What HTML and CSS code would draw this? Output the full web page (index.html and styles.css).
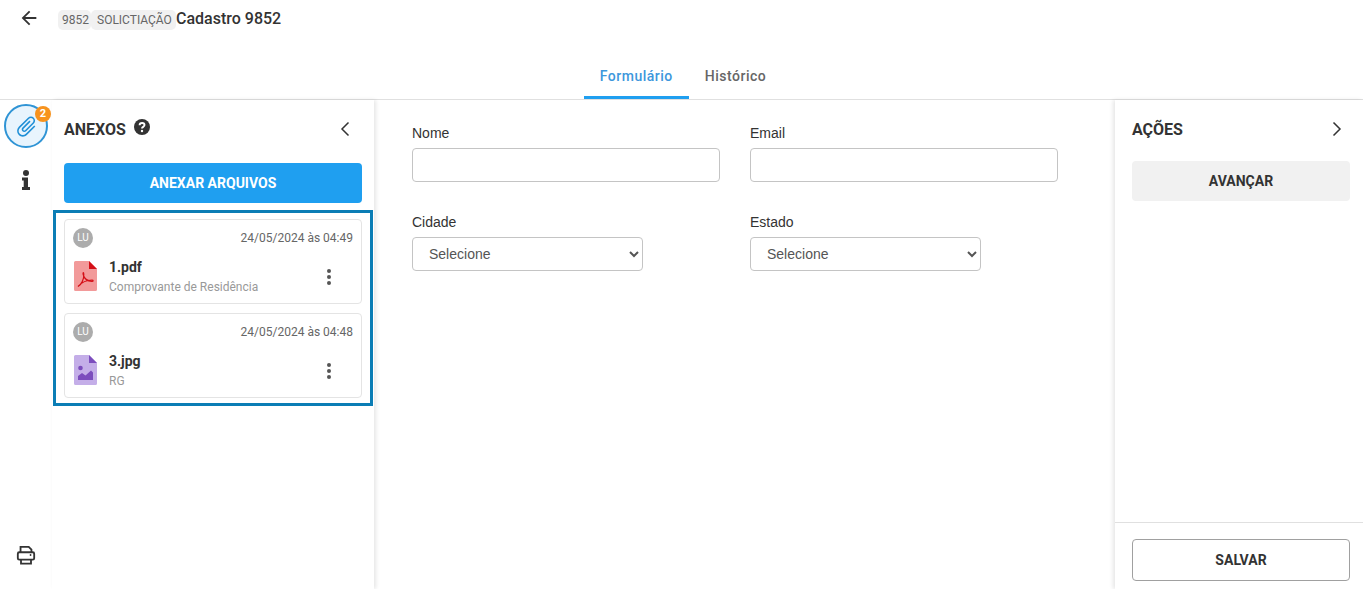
FILE: index.html
```html
<!DOCTYPE html>
<html lang="pt-BR">
<head>
<meta charset="utf-8">
<title>Cadastro 9852</title>
<link rel="stylesheet" href="styles.css">
</head>
<body>
<div class="page">
  <header class="top">
    <div class="titlebar">
      <svg class="back" viewBox="0 0 24 24" width="22" height="22"><path d="M20 11H7.830l5.590-5.590L12 4l-8 8 8 8 1.410-1.410L7.830 13H20v-2z" fill="#333"/></svg>
      <span class="chip chip-id">9852</span>
      <span class="chip chip-type">SOLICTIAÇÃO</span>
      <span class="title">Cadastro 9852</span>
    </div>
    <nav class="tabs">
      <a class="tab active">Formulário</a>
      <a class="tab">Histórico</a>
    </nav>
  </header>
  <div class="content">
    <aside class="rail">
      <div class="rail-clip">
        <svg viewBox="0 0 24 24" width="25" height="25"><path transform="rotate(45 12 12)" d="M16.500 6v11.500c0 2.210-1.790 4-4 4s-4-1.790-4-4V5c0-1.380 1.120-2.500 2.500-2.500s2.500 1.120 2.500 2.500v10.500c0 .55-.45 1-1 1s-1-.45-1-1V6H10v9.500c0 1.380 1.120 2.500 2.500 2.500s2.500-1.120 2.500-2.500V5c0-2.210-1.790-4-4-4S7 2.790 7 5v12.500c0 3.040 2.460 5.500 5.500 5.500s5.500-2.460 5.500-5.500V6h-1.500z" fill="#1f8fd6"/></svg>
        <span class="badge">2</span>
      </div>
      <svg class="rail-info" viewBox="0 0 8 20" width="8" height="20"><circle cx="4" cy="3" r="3" fill="#333"/><path d="M0 7.500h6V17h2v3H0v-3h1.700v-6.500H0z" fill="#333"/></svg>
      <svg class="rail-print" viewBox="0 0 22 22" width="20" height="20" fill="none" stroke="#333" stroke-width="2"><path d="M5 8V2h9l3 3v3"/><rect x="2" y="8" width="18" height="8" rx="1.500"/><path d="M5.500 16v4.500h11V16"/><circle cx="16" cy="11" r="1" fill="#333" stroke="none"/></svg>
    </aside>
    <section class="attachments">
      <div class="panel-head">
        <h2 class="panel-title">ANEXOS</h2>
        <svg class="help" viewBox="0 0 16 16" width="16" height="16"><circle cx="8" cy="8" r="8" fill="#333"/><path d="M5.600 6.300c0-1.500 1.100-2.300 2.500-2.300s2.400.8 2.400 2.100c0 1.800-2.500 1.700-2.500 3.300" fill="none" stroke="#fff" stroke-width="1.900"/><circle cx="8" cy="12" r="1.200" fill="#fff"/></svg>
        <svg class="chev" viewBox="0 0 12 16" width="12" height="16"><path d="M9.500 1.500 3 8l6.500 6.500" fill="none" stroke="#333" stroke-width="1.500"/></svg>
      </div>
      <button class="attach-btn">ANEXAR ARQUIVOS</button>
      <div class="file-box">
        <article class="file">
          <div class="file-top">
            <span class="avatar">LU</span>
            <time class="file-date">24/05/2024 às 04:49</time>
          </div>
          <div class="file-body">
            <svg class="file-icon" viewBox="0 0 23 30" width="23" height="30"><path d="M1.500 0H15l8 8v20.500a1.500 1.500 0 0 1-1.500 1.500h-20A1.500 1.500 0 0 1 0 28.500v-27A1.500 1.500 0 0 1 1.500 0z" fill="#f29a9a"/><path d="M15 0l8 8h-8z" fill="#d40f17"/><path d="M4 25.500c3.500-2 6-7 5.800-12 0-1.500 0-2-.3-2-.5 0-.5 1-.3 2 .8 3.500 4 6.500 8.800 6.800 1.500 0 1.500-1.300 0-1.300-4.500 0-10 2-14 6.500z" fill="none" stroke="#d40f17" stroke-width="1.200"/></svg>
            <div class="file-text">
              <strong class="file-name">1.pdf</strong>
              <span class="file-type">Comprovante de Residência</span>
            </div>
            <span class="kebab"><i></i><i></i><i></i></span>
          </div>
        </article>
        <article class="file">
          <div class="file-top">
            <span class="avatar">LU</span>
            <time class="file-date">24/05/2024 às 04:48</time>
          </div>
          <div class="file-body">
            <svg class="file-icon" viewBox="0 0 23 30" width="23" height="30"><path d="M1.500 0H15l8 8v20.500a1.500 1.500 0 0 1-1.500 1.500h-20A1.500 1.500 0 0 1 0 28.500v-27A1.500 1.500 0 0 1 1.500 0z" fill="#c4aee8"/><path d="M15 0l8 8h-8z" fill="#7c4dbd"/><circle cx="6.500" cy="13" r="2.300" fill="#7c4dbd"/><path d="M4 25v-4l4-3 3.500 2.500L17 15.500l2 2V25z" fill="#7c4dbd"/></svg>
            <div class="file-text">
              <strong class="file-name">3.jpg</strong>
              <span class="file-type">RG</span>
            </div>
            <span class="kebab"><i></i><i></i><i></i></span>
          </div>
        </article>
      </div>
    </section>
    <main class="form">
      <label class="field">
        <span class="field-label">Nome</span>
        <input class="input" type="text">
      </label>
      <label class="field">
        <span class="field-label">Email</span>
        <input class="input" type="text">
      </label>
      <label class="field">
        <span class="field-label">Cidade</span>
        <select class="select"><option>Selecione</option></select>
      </label>
      <label class="field">
        <span class="field-label">Estado</span>
        <select class="select"><option>Selecione</option></select>
      </label>
    </main>
    <aside class="actions">
      <div class="actions-main">
        <div class="panel-head actions-head">
          <h2 class="panel-title">AÇÕES</h2>
          <svg class="chev" viewBox="0 0 12 16" width="12" height="16"><path d="M2.500 1.500 9 8l-6.500 6.500" fill="none" stroke="#333" stroke-width="1.500"/></svg>
        </div>
        <button class="advance-btn">AVANÇAR</button>
      </div>
      <div class="actions-foot">
        <button class="save-btn">SALVAR</button>
      </div>
    </aside>
  </div>
</div>
</body>
</html>
```

FILE: styles.css
```css
* { box-sizing: border-box; }
html, body { margin: 0; height: 100%; }
body { font-family: Roboto, "Liberation Sans", sans-serif; color: #333; background: #fff; overflow: hidden; }
.page { height: 589px; display: flex; flex-direction: column; }

.top { height: 100px; border-bottom: 1px solid #e0e0e0; display: flex; flex-direction: column; flex: none; }
.titlebar { display: flex; align-items: flex-start; padding: 7px 0 0 18px; height: 61px; }
.back { margin-right: 18px; }
.chip { background: #f1f1f1; border-radius: 5px; font-size: 12px; color: #666; height: 20px; line-height: 20px; margin-top: 3px; padding: 0 4px; }
.chip-id { width: 33px; }
.chip-type { width: 85px; padding: 0 6px; white-space: nowrap; }
.title { font-size: 16px; font-weight: 500; color: #333; line-height: 24px; }
.tabs { display: flex; justify-content: center; height: 39px; padding-left: 3px; }
.tab { font-size: 14px; font-weight: 500; letter-spacing: .5px; color: #666; padding: 7px 16px 0; height: 39px; line-height: 18px; border-bottom: 3px solid transparent; }
.tab.active { color: #3d97dc; border-bottom-color: #1f9ff0; border-radius: 3px 3px 0 0; width: 105px; white-space: nowrap; }

.content { flex: 1; display: flex; min-height: 0; }
.rail { width: 52px; flex: none; display: flex; flex-direction: column; align-items: center; padding: 4px 0 24px; position: relative; }
.rail-clip { width: 44px; height: 44px; border-radius: 50%; border: 2px solid #2f94d5; background: #e8f4fd; display: flex; align-items: center; justify-content: center; position: relative; }
.badge { position: absolute; top: 0; right: -5px; width: 16px; height: 16px; border-radius: 50%; background: #f7931e; color: #fff; font-size: 11px; font-weight: 700; line-height: 16px; text-align: center; }
.rail-info { margin-top: 22px; }
.rail-print { margin-top: auto; }

.attachments { width: 322px; flex: none; padding: 0 12px; position: relative; box-shadow: 2px 0 4px rgba(0,0,0,.1); }
.panel-head { display: flex; align-items: center; height: 59px; padding-bottom: 1px; }
.panel-title { margin: 0; font-size: 16px; font-weight: 700; color: #333; }
.help { margin: -5px 0 0 8px; }
.chev { margin-left: auto; }
.attachments .chev { margin-right: 11px; }
.attach-btn { display: block; width: 298px; height: 40px; margin: 4px 0 0; border: 0; border-radius: 4px; background: #1f9ff0; color: #fff; font: 700 14px Roboto, sans-serif; }
.file-box { margin: 7px -2px 0 -11px; width: 320px; height: 196px; border: 3px solid #0b7db5; padding: 6px 8px; }
.file { height: 85px; border: 1px solid #e4e4e4; border-radius: 4px; padding: 8px 8px 0; margin-bottom: 9px; }
.file-top { display: flex; align-items: center; justify-content: space-between; height: 20px; }
.avatar { width: 20px; height: 20px; border-radius: 50%; background: #acacac; color: #fff; font-size: 10px; line-height: 20px; text-align: center; }
.file-date { font-size: 12px; color: #666; }
.file-body { display: flex; align-items: flex-start; margin-top: 12px; }
.file-icon { flex: none; margin: 1px 0 0 1px; }
.file-text { margin: -2px 0 0 12px; display: flex; flex-direction: column; flex: 1; }
.file-name { font-size: 14px; font-weight: 700; line-height: 18px; color: #333; }
.file-type { font-size: 12px; line-height: 16px; color: #999; margin-top: 3px; }
.kebab { display: flex; flex-direction: column; gap: 2px; margin: 9px 22px 0 0; }
.kebab i { display: block; width: 4px; height: 4px; border-radius: 50%; background: #555; }

.form { flex: 1; display: grid; grid-template-columns: 308px 308px; column-gap: 30px; grid-auto-rows: 89px; padding: 24px 0 0 38px; }
.field { display: block; }
.field-label { display: block; font: 14px/18px "Liberation Sans", Arial, sans-serif; color: #333; height: 24px; }
.input { display: block; width: 308px; height: 34px; border: 1px solid #c4c4c4; border-radius: 4px; background: #fff; }
.select { display: block; width: 231px; height: 34px; border: 1px solid #c4c4c4; border-radius: 4px; background: #fff; padding-left: 12px; font: 14px "Liberation Sans", Arial, sans-serif; color: #555; }

.actions { width: 248px; flex: none; display: flex; flex-direction: column; box-shadow: -2px 0 4px rgba(0,0,0,.1); }
.actions-main { flex: 1; padding: 0 13px 0 17px; }
.actions-head .chev { margin-right: 7px; }
.advance-btn { display: block; width: 218px; height: 40px; margin-top: 2px; border: 0; border-radius: 4px; background: #f1f1f1; color: #333; font: 700 14px Roboto, sans-serif; }
.actions-foot { height: 67px; border-top: 1px solid #e0e0e0; padding: 16px 13px 0 17px; }
.save-btn { display: block; width: 218px; height: 42px; border: 1px solid #a0a0a0; border-radius: 4px; background: #fff; color: #333; font: 700 14px Roboto, sans-serif; }
```
